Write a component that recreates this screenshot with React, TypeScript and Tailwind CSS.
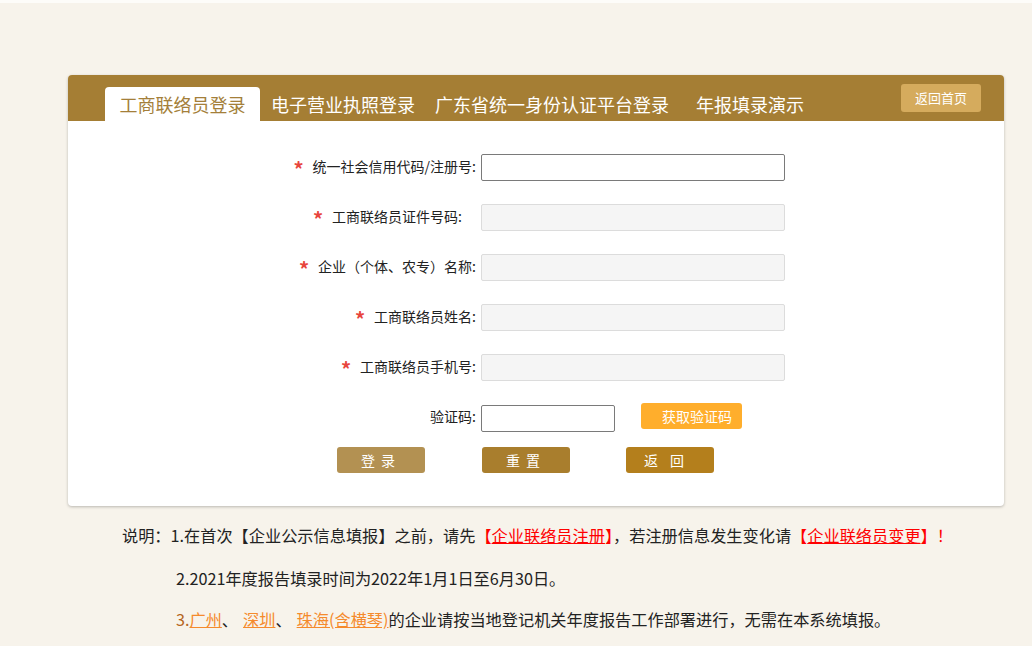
import React from "react";

const fields = [
  { label: "统一社会信用代码/注册号:", active: true },
  { label: "工商联络员证件号码:", active: false, pad: "pr-[14px]" },
  { label: "企业（个体、农专）名称:", active: false },
  { label: "工商联络员姓名:", active: false },
  { label: "工商联络员手机号:", active: false },
];

export default function App() {
  return (
    <div
      className="min-h-[646px] w-full bg-[#f7f3eb] text-[#333]"
      style={{ fontFamily: '"Microsoft YaHei", "Noto Sans CJK SC", "Noto Sans", sans-serif' }}
    >
      <div className="h-[3px] bg-white/70" />
      <div className="pt-[72px] pl-[68px]">
        {/* card */}
        <div className="w-[936px] rounded-[4px] bg-white shadow-[0_1px_3px_rgba(0,0,0,0.25)] overflow-hidden">
          <div className="h-[46px] bg-[#a57e34] flex items-end pl-[37px] pr-[23px] relative">
            <div className="h-[34px] w-[155px] bg-white rounded-t-[4px] flex items-center justify-center text-[18px] text-[#a47f3a]">
              工商联络员登录
            </div>
            <div className="h-[34px] flex items-center text-[18px] text-white ml-[11px]">电子营业执照登录</div>
            <div className="h-[34px] flex items-center text-[18px] text-white ml-[20px]">广东省统一身份认证平台登录</div>
            <div className="h-[34px] flex items-center text-[18px] text-white ml-[27px]">年报填录演示</div>
            <button className="absolute right-[23px] top-[9px] h-[28px] w-[80px] rounded-[3px] bg-[#d5ab5d] text-[13px] text-white">
              返回首页
            </button>
          </div>

          <div className="pt-[33px] pb-[33px] flex flex-col">
            <div className="flex flex-col gap-[23px]">
              {fields.map((f, i) => (
                <div key={i} className="flex items-center h-[27px]">
                  <div className="w-[408px] flex justify-end items-center text-[14px] text-[#222] -mt-[3px]">
                    <span className="text-[#e8453c] text-[20px] font-bold mr-[9px] leading-none mt-[6px]">*</span>
                    <span className={f.pad ?? ""}>{f.label}</span>
                  </div>
                  <div
                    className={
                      "ml-[5px] h-[27px] w-[304px] rounded-[2px] border " +
                      (f.active ? "bg-white border-[#7a7a7a]" : "bg-[#f5f5f5] border-[#dcdcdc]")
                    }
                  />
                </div>
              ))}
            </div>

            <div className="flex items-center mt-[23px] h-[28px]">
              <div className="w-[408px] flex justify-end text-[14px] text-[#222] -mt-[3px]">验证码:</div>
              <div className="ml-[5px] h-[27px] w-[134px] border border-[#7a7a7a] rounded-[2px] bg-white" />
              <button className="ml-[26px] -mt-[4px] h-[26px] w-[101px] rounded-[3px] bg-[#ffae2c] text-[14px] text-white text-left pl-[21px]">
                获取验证码
              </button>
            </div>

            <div className="flex mt-[15px] pl-[269px]">
              <button className="h-[26px] w-[88px] rounded-[3px] bg-[#b39152] text-[14px] text-white tracking-[6px]">
                登录
              </button>
              <button className="ml-[57px] h-[26px] w-[88px] rounded-[3px] bg-[#a97e2d] text-[14px] text-white tracking-[6px]">
                重置
              </button>
              <button className="ml-[56px] h-[26px] w-[88px] rounded-[3px] bg-[#b47f1c] text-[14px] text-white tracking-[12px]">
                返回
              </button>
            </div>
          </div>
        </div>

        {/* notes */}
        <div className="text-[16.2px] text-[#222]">
          <p className="mt-[19px] ml-[54px] leading-[20px]">
            说明：1.在首次【企业公示信息填报】之前，请先
            <span className="text-[#ff0000]">【<span className="underline">企业联络员注册</span>】</span>
            ，若注册信息发生变化请
            <span className="text-[#ff0000]">【<span className="underline">企业联络员变更</span>】！</span>
          </p>
          <p className="mt-[23px] ml-[108px] leading-[20px]">2.2021年度报告填录时间为2022年1月1日至6月30日。</p>
          <p className="mt-[21px] ml-[108px] leading-[20px]">
            <span className="text-[#b5651d]">3.</span>
            <span className="text-[#f58a2c] underline">广州</span>、
            <span className="text-[#f58a2c] underline ml-[5px]">深圳</span>、
            <span className="text-[#f58a2c] underline ml-[5px]">珠海(含横琴)</span>
            的企业请按当地登记机关年度报告工作部署进行，无需在本系统填报。
          </p>
        </div>
      </div>
    </div>
  );
}
